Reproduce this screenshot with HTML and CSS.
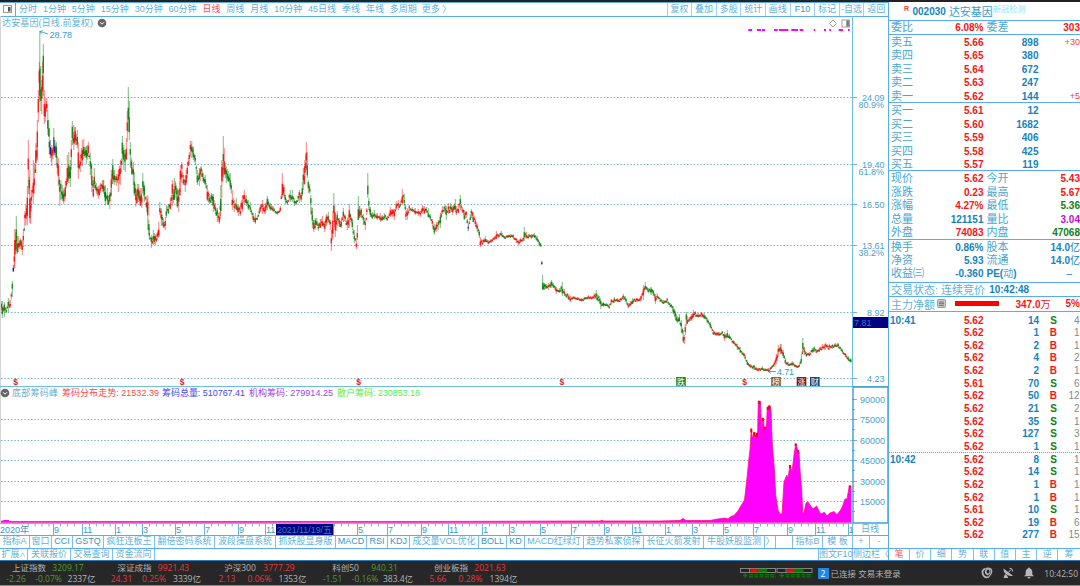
FILE: index.html
```html
<!DOCTYPE html>
<html lang="zh-CN">
<head>
    <meta charset="UTF-8">
    <meta name="viewport" content="width=device-width, initial-scale=1.0">
    <title>达安基因 002030</title>
    <link rel="stylesheet" href="styles.css">
</head>
<body>
    <div class="app">
        <div class="workspace">
            <div class="left">
                <div class="toolbar">
                    <div class="layout-btn">
                        <svg width="9" height="8" viewBox="0 0 9 8"><rect x="0.5" y="0.5" width="8" height="7" fill="#fff" stroke="#999"/><rect x="5" y="2" width="2.5" height="4.5" fill="#555"/></svg>
                    </div>
                    <div class="periods">
                        <span>分时</span><span>1分钟</span><span>5分钟</span><span>15分钟</span><span>30分钟</span><span>60分钟</span><span class="active">日线</span><span>周线</span><span>月线</span><span>10分钟</span><span>45日线</span><span>季线</span><span>年线</span><span>多周期</span><span class="more">更多 〉</span>
                    </div>
                    <div class="actions">
                        <span>复权</span><span>叠加</span><span>多股</span><span>统计</span><span>画线</span><span class="lat">F10</span><span>标记</span><span>-自选</span><span>返回</span>
                    </div>
                </div>

                <svg class="plot" width="888" height="519" viewBox="0 16 888 519">
                    <g id="grid"></g>
                    <g id="candles"></g>
                    <g id="signals"></g>
                    <g id="chips"></g>

                    <!-- frames -->
                    <path class="side" d="M0.5 16V523"/>
                    <path class="frame" d="M852.5 16V386M0 386.5H888"/>
                    <path class="frame strong" d="M853 387V523H888V387Z"/>
                    <path class="frame" d="M0 523.5H888M852.5 523V535"/>

                    <!-- main chart header -->
                    <text class="t" x="2" y="26" textLength="91">达安基因(日线.前复权)</text>
                    <circle cx="102" cy="23" r="4.3" fill="#666"/>
                    <path d="M100 22.2l2 2 2-2" class="chev"/>
                    <path d="M833 20l3.5 3.5-3.5 3.5-3.5-3.5z" fill="#fff" stroke="#888" stroke-width="0.8"/>
                    <rect x="842" y="20" width="7.5" height="7" fill="#fff" stroke="#888" stroke-width="0.8"/>
                    <rect x="846.3" y="20.4" width="2.6" height="6.2" fill="#777"/>
                    <path class="arrow" d="M48 34l-8-2.5m3-1l-3 1 1.5 2.5"/>
                    <text class="t num" x="49.5" y="38">28.78</text>
                    <path class="arrow" d="M776 371.5h-8m3-2l-3 2 3 2"/>
                    <text class="t num" x="777" y="375" textLength="17">4.71</text>

                    <!-- event markers -->
                    <g id="markers"></g>

                    <!-- sub chart legend -->
                    <circle cx="5" cy="393" r="4.3" fill="#666"/>
                    <path d="M3 392.2l2 2 2-2" class="chev"/>
                    <text class="t" x="12" y="396" textLength="46">底部筹码峰</text>
                    <text class="t c-red" x="62" y="396" textLength="97">筹码分布走势: 21532.39</text>
                    <text class="t c-blue" x="162" y="396" textLength="83">筹码总量: 510767.41</text>
                    <text class="t c-purple" x="249" y="396" textLength="84">机构筹码: 279914.25</text>
                    <text class="t c-lime" x="337" y="396" textLength="83">散户筹码: 230853.16</text>

                    <rect x="853" y="317" width="35" height="11" fill="#000080"/>
                    <text class="t num hl" x="854" y="325.5">7.81</text>
                    <g id="months"></g>
                    <rect x="276" y="524" width="57.5" height="11" fill="#000080"/>
                    <text class="t hl" x="277" y="532.5" textLength="55">2021/11/19/五</text>
                    <text class="t" x="861" y="532">日线</text>
                </svg>

                <div class="tabs indicators">
                    <span>指标A</span><span>窗口</span><span class="lat">CCI</span><span class="lat">GSTQ</span><span>疯狂连板王</span><span>翻倍密码系统</span><span>波段操盘系统</span><span>抓妖股显身版</span><span class="lat">MACD</span><span class="lat">RSI</span><span class="lat">KDJ</span><span>成交量VOL优化</span><span class="lat">BOLL</span><span class="lat">KD</span><span>MACD红绿灯</span><span>趋势私家侦探</span><span>长征火箭发射</span><span>牛股妖股监测</span><span>〉</span><span></span><span>指标B</span><span>模 板</span><span>+</span><span>-</span>
                </div>
                <div class="tabs extras">
                    <span>扩展<small>∧</small></span><span>关联报价</span><span>交易查询</span><span>资金流向</span><span></span><span>图文F10</span><span>侧边栏〈</span>
                </div>
            </div>

            <div class="right">
                <div class="stock"><i>R</i><b>002030</b><span>达安基因</span><em>新冠检测</em></div>
                <div class="block pair single">
                    <div class="row"><span>委比</span><b class="up">6.08%</b><span>委差</span><b class="up">303</b></div>
                </div>
                <div class="block book">
                    <div class="row"><span>卖五</span><b class="up">5.66</b><b>898</b><i>+30</i></div>
                    <div class="row"><span>卖四</span><b class="up">5.65</b><b>380</b><i></i></div>
                    <div class="row"><span>卖三</span><b class="up">5.64</b><b>672</b><i></i></div>
                    <div class="row"><span>卖二</span><b class="up">5.63</b><b>247</b><i></i></div>
                    <div class="row"><span>卖一</span><b class="up">5.62</b><b>144</b><i>+5</i></div>
                </div>
                <div class="block book">
                    <div class="row"><span>买一</span><b class="up">5.61</b><b>12</b><i></i></div>
                    <div class="row"><span>买二</span><b class="up">5.60</b><b>1682</b><i></i></div>
                    <div class="row"><span>买三</span><b class="up">5.59</b><b>406</b><i></i></div>
                    <div class="row"><span>买四</span><b class="up">5.58</b><b>425</b><i></i></div>
                    <div class="row"><span>买五</span><b class="up">5.57</b><b>119</b><i></i></div>
                </div>
                <div class="block pair">
                    <div class="row"><span>现价</span><b class="up">5.62</b><span>今开</span><b class="up">5.43</b></div>
                    <div class="row"><span>涨跌</span><b class="up">0.23</b><span>最高</span><b class="up">5.67</b></div>
                    <div class="row"><span>涨幅</span><b class="up">4.27%</b><span>最低</span><b class="down">5.36</b></div>
                    <div class="row"><span>总量</span><b>121151</b><span>量比</span><b class="ratio">3.04</b></div>
                    <div class="row"><span>外盘</span><b class="up">74083</b><span>内盘</span><b class="down">47068</b></div>
                </div>
                <div class="block pair basics">
                    <div class="row"><span>换手</span><b>0.86%</b><span>股本</span><b>14.0<u>亿</u></b></div>
                    <div class="row"><span>净资</span><b>5.93</b><span>流通</span><b>14.0<u>亿</u></b></div>
                    <div class="row"><span>收益㈢</span><b>-0.360</b><span class="pe"><b>PE(</b>动<b>)</b></span><b class="dash">–</b></div>
                </div>
                <div class="block status-line"><span>交易状态: 连续竞价</span><b>10:42:48</b></div>
                <div class="block netflow">
                    <span>主力净额</span>
                    <svg width="9" height="9" viewBox="0 0 9 9"><rect x="0.5" y="0.5" width="8" height="8" rx="1" fill="#ccc" stroke="#999"/><path d="M2 3h5M2 4.7h5M2 6.4h5" stroke="#555" stroke-width="0.8"/></svg>
                    <div class="bar"></div>
                    <b class="up">347.0<u>万</u></b><b class="up">5%</b>
                </div>
                <div class="ticks" id="ticks"></div>
                <div class="tabs side-tabs">
                    <span class="active">笔</span><span>价</span><span>细</span><span>势</span><span>联</span><span>值</span><span>主</span><span>逆</span><span>筹</span>
                </div>
            </div>
        </div>

        <div class="statusbar">
            <div class="index down"><div class="name"><span>上证指数</span><b>3209.17</b></div><div class="vals"><b>-2.26</b><b>-0.07%</b><span>2337亿</span></div></div>
            <div class="index up"><div class="name"><span>深证成指</span><b>9921.43</b></div><div class="vals"><b>24.31</b><b>0.25%</b><span>3339亿</span></div></div>
            <div class="index up"><div class="name"><span>沪深300</span><b>3777.29</b></div><div class="vals"><b>2.13</b><b>0.06%</b><span>1353亿</span></div></div>
            <div class="index down"><div class="name"><span>科创50</span><b>940.31</b></div><div class="vals"><b>-1.51</b><b>-0.16%</b><span>383.4亿</span></div></div>
            <div class="index up"><div class="name"><span>创业板指</span><b>2021.63</b></div><div class="vals"><b>5.66</b><b>0.28%</b><span>1394亿</span></div></div>
            <div class="conn">
                <svg width="73" height="12" viewBox="0 0 73 12">
                    <g id="meter">
                        <rect x="0.5" y="1.5" width="35" height="4" fill="#222" stroke="#999" stroke-width="0.8"/>
                        <path d="M9.500 1v5" stroke="#999" stroke-width="0.8"/>
                        <rect x="10.5" y="1.8" width="7" height="3.6" fill="#f00"/>
                        <rect x="17.5" y="1.8" width="9.5" height="3.6" fill="#008000"/>
                        <path d="M3 8.5h4.6M5.3 6v5" stroke="#008000" stroke-width="1.3"/>
                        <path d="M9 7.6h27M9 9.8h27" stroke="#008000" stroke-width="1.3" stroke-dasharray="4 1.3"/>
                    </g>
                    <use href="#meter" x="36.5"/>
                </svg>
                <span class="badge">2</span>
                <span class="login">已连接 交易未登录</span>
            </div>
            <div class="tray">
                <svg width="12" height="12" viewBox="0 0 12 12" fill="none" stroke="#b8b8b8"><path d="M4.600 1.800C1.500 2 .8 5 2 7.500 3 9.800 5 10.800 7 10" stroke-width="1.8"/><path d="M4.600 1.600C7 .4 11 1.200 10.800 4.500 10.600 7.500 9 8.500 7 10.600" stroke-width="1.2"/><ellipse cx="7" cy="4.600" rx="2.100" ry="2.600" stroke-width="1.200"/><path d="M4.600 3.500C4 6 5.500 7.500 7.500 8" stroke-width="1.200"/></svg>
                <svg width="12" height="12" viewBox="0 0 12 12" fill="#b8b8b8"><path d="M1.500 1.500C1 5.500 5.500 10 11 8.800z"/><path d="M3 7L1.500 11h4.700L5.200 8.500z"/><path d="M6.200 5.500l3-3" stroke="#b8b8b8"/><path d="M7.500 1.200a3.300 3.300 0 0 1 3.300 3.300" fill="none" stroke="#b8b8b8"/></svg>
                <svg width="12" height="12" viewBox="0 0 12 12" fill="#b8b8b8"><path d="M6 .5a1 1 0 0 1 1 1C8.700 2 9.300 3.500 9.300 5v2.500L11 9.300H1L2.700 7.500V5C2.700 3.500 3.300 2 5 1.500a1 1 0 0 1 1-1z"/><path d="M4.500 10h3a1.500 1.500 0 0 1-3 0z"/></svg>
                <span>10:42:50</span>
            </div>
        </div>
    </div>
    <script src="chart.js"></script>
</body>
</html>
```

FILE: styles.css
```css
* {
    box-sizing: border-box;
}
body {
    margin: 0;
    width: 1080px;
    height: 586px;
    overflow: hidden;
    background: #fff;
    font-family: "Liberation Sans", "Noto Sans CJK SC", sans-serif;
    font-size: 9px;
    color: #5fb2d8;
}
b, i, em, u {
    font-style: normal;
    text-decoration: none;
}
.app {
    display: flex;
    flex-direction: column;
    height: 586px;
    border-top: 2px solid #222;
}
.workspace {
    display: flex;
    height: 558px;
}
.left {
    width: 888px;
    display: flex;
    flex-direction: column;
}

/* top toolbar */
.toolbar {
    display: flex;
    height: 15px;
    margin-bottom: -1px;
    line-height: 13px;
    border-top: 1px solid #58acf0;
    border-bottom: 1px solid #58acf0;
    white-space: nowrap;
}
.layout-btn {
    width: 16px;
    padding: 2px 0 0 3px;
    line-height: 0;
    border-right: 1px solid #58acf0;
}
.periods {
    display: flex;
    gap: 5.9px;
    flex: 1;
    padding-left: 3px;
}
.periods .more {
    margin-left: -1px;
}
.active {
    color: #ff5050;
}
.actions {
    display: grid;
    grid-template-columns: repeat(9, 24.6px);
}
.actions span {
    text-align: center;
    border-left: 1px solid #9fd0f5;
}

/* plot */
.plot {
    display: block;
    flex: none;
}
.t {
    font-size: 9px;
    fill: #5fb2d8;
}
.t.num {
    fill: #3a98ca;
}
.t.axis {
    text-anchor: end;
    fill: #479fce;
}
.t.hl {
    fill: #2a7bc0;
}
.t.c-red { fill: #ff4b4b; }
.t.c-blue { fill: #4646ee; }
.t.c-purple { fill: #a040f0; }
.t.c-lime { fill: #50f050; }
.grid {
    stroke: #78b3cc;
    stroke-dasharray: 1.5 1.83;
    fill: none;
}
.frame {
    stroke: #6fbce4;
    fill: none;
}
.frame.strong {
    stroke: #3f9fd2;
    stroke-width: 1.4;
}
.side {
    stroke: #d4d4d4;
}
.tick {
    stroke: #3f9fd2;
    stroke-width: 0.8;
}
.chev {
    stroke: #fff;
    fill: none;
}
.arrow {
    stroke: #2f93cb;
    stroke-width: 0.8;
    fill: none;
}
.ev {
    font-size: 8.5px;
    font-weight: bold;
    fill: #f01010;
    text-anchor: middle;
}
.ev.tag {
    fill: #fff;
    font-size: 8px;
    font-weight: normal;
}

/* tab strips */
.tabs {
    display: grid;
    height: 12.5px;
    line-height: 11.5px;
    border-top: 1px solid #58acf0;
    white-space: nowrap;
}
.tabs span {
    text-align: center;
    border-right: 1px solid #7cc0f3;
    overflow: hidden;
}
.indicators {
    grid-template-columns: 30px 22px 21px 31px 51px 60px 61px 60px 31px 21px 22px 69px 28px 18px 59px 60px 60px 61px 11px 17px 30px 30px 17px 18px;
}
.lat {
    color: #3a96c6;
}
.extras {
    grid-template-columns: 28px 43px 42px 42px 664px 34px 35px;
}
.extras small {
    font-size: 6px;
}
.side-tabs {
    grid-template-columns: 21px repeat(8, 21.2px);
}
.side-tabs span:last-child, .indicators span:last-child, .extras span:last-child {
    border-right: 0;
}

/* quote panel */
.right {
    width: 192px;
    display: flex;
    flex-direction: column;
    border-left: 1px solid #58acf0;
    font-size: 10px;
    white-space: nowrap;
}
.right b {
    color: #1583bd;
}
.right .up { color: #fa1414; }
.right .down { color: #128012; }
.right .ratio { color: #c010c8; }
.right u {
    font-weight: normal;
}
.stock {
    display: flex;
    height: 18px;
    padding: 1px 0 0 15px;
    line-height: 18px;
}
.stock i {
    font-size: 7px;
    font-weight: bold;
    color: #fa3c3c;
    line-height: 11px;
    width: 8.5px;
}
.stock span {
    font-size: 11px;
    margin-left: 3px;
    color: #3a9bce;
}
.stock em {
    font-size: 8.2px;
    line-height: 13px;
    color: #8fe4f2;
}
.block {
    border-top: 1px solid #58acf0;
    padding: 0 0 0 2px;
}
.row {
    display: grid;
    height: 13.45px;
    line-height: 15px;
}
.row > b, .row > i {
    text-align: right;
}
.row > span {
    font-size: 11px;
    color: #4aa5d0;
}
.row > i {
    font-size: 9px;
    color: #fa3c3c;
}
.pair .row {
    grid-template-columns: 36px 56.5px 32px 64.5px;
}
.pair .row > span:nth-child(3) {
    padding-left: 3px;
}
.book .row {
    grid-template-columns: 36px 56.5px 55px 41.5px;
}
.row > span.pe {
    font-size: 10px;
}
.row .dash {
    padding-right: 8px;
    font-weight: normal;
}
.row u {
    font-size: 10px;
}
.single {
    height: 14px;
}
.single .row {
    line-height: 13px;
}
.book, .pair:not(.single) {
    height: 68.2px;
}
.pair.basics {
    height: 43px;
}
.status-line {
    height: 14px;
    line-height: 14px;
    display: flex;
    gap: 4px;
    font-size: 11px;
}
.status-line b {
    font-size: 10px;
}
.netflow {
    display: flex;
    align-items: center;
    height: 16px;
    font-size: 11px;
    border-bottom: 1px solid #58acf0;
}
.netflow svg {
    margin-left: 2px;
}
.netflow .bar {
    width: 44px;
    height: 5px;
    margin-left: 9px;
    background: #f00;
}
.netflow b {
    font-size: 10px;
    margin-left: 16.5px;
}
.netflow b:last-child {
    margin: 0 0 0 auto;
}
.ticks {
    flex: 1;
    padding-top: 1px;
}
.tick-row {
    display: grid;
    grid-template-columns: 40px 53.5px 55.5px 22px 18.5px;
    height: 12.65px;
    line-height: 13px;
    padding-left: 1px;
    border-top: 1px dotted transparent;
}
.tick-row.mark {
    border-top-color: #5ba3d8;
}
.tick-row b {
    text-align: right;
}
.tick-row b:first-child {
    text-align: left;
}
.tick-row b.side-col {
    padding-right: 4px;
}
.tick-row i {
    color: #888;
    text-align: right;
}
.side-tabs {
    font-size: 9px;
}

/* bottom status bar */
.statusbar {
    display: flex;
    height: 26px;
    background: #272727;
    border-top: 1px solid #2b78b8;
    border-bottom: 1px solid #8a8a8a;
    font-family: "Open Sans", "Noto Sans CJK SC", sans-serif;
    font-size: 8.5px;
    color: #b4b4b4;
    white-space: nowrap;
}
.statusbar b {
    font-weight: normal;
}
.index {
    width: 105.5px;
    padding-top: 1px;
    line-height: 11px;
    text-align: center;
}
.name {
    display: grid;
    grid-template-columns: 40px 38px;
    padding-left: 9px;
    height: 11px;
}
.vals {
    display: grid;
    grid-template-columns: 32px 33px 33px;
    height: 11px;
}
.index.up b { color: #e03a3e; }
.index.down b { color: #4f9c30; }
.conn {
    display: flex;
    align-items: center;
    margin-left: 212px;
}
.badge {
    width: 11px;
    height: 11px;
    margin: 0 2px 0 5px;
    background: #1e88e5;
    color: #fff;
    line-height: 11px;
    text-align: center;
}
.tray {
    display: flex;
    align-items: center;
    gap: 9px;
    margin-left: auto;
    padding-right: 2px;
}
```

FILE: chart.js
```javascript
const NS = 'http://www.w3.org/2000/svg';

function add(parent, tag, attrs, text) {
    const el = document.createElementNS(NS, tag);
    for (const k in attrs) el.setAttribute(k, attrs[k]);
    if (text !== undefined) el.textContent = text;
    document.getElementById(parent).appendChild(el);
    return el;
}

// daily range: x, high, low
const range = `0,299,311 2,301,318 4,302,317 6,308,313 8,298,312 10,300,308 12,281,297 13,265,272 14.5,229,268 16,216,249 17,236,254 18,236,252
20,238,249 22,240,255 23,229,247 24.5,211,226 27,186,225 28,140,194 29.5,170,223 30.3,198,224 31,190,208 33,160,204 34,163,194 35.5,143,173
37,120,160 38,90,122 39,62,102 39.5,31,100 40.5,66,111 41.5,80,114 42.3,62,92 43,44,96 44,90,124 45,98,122 46.5,98,112 47.5,110,135 49,128,154
50,140,158 51.5,145,166 53.5,128,156 54.5,140,155 56,142,165 58,158,186 59.5,184,206 60.5,180,200 62,185,201 63.5,188,204 65,181,199 67,155,184
68.5,152,183 70,160,187 71,140,170 72,121,145 73.5,125,150 75,127,145 77,130,148 78,142,179 80,155,172 82,140,166 83.5,139,156 86,146,164
88,142,157 90,153,175 91.5,165,192 93,180,197 94,168,188 96,183,194 98,186,199 100,183,193 102,180,192 103.5,180,194 105,185,205 107,188,205
109.5,192,209 111,170,195 112.5,159,184 114,170,185 116,174,186 118,170,192 120,160,185 122,136,165 123.5,145,170 125,150,172 126,138,160
127,111,142 128,87,132 129,101,140 130,142,168 131.5,160,175 133,162,185 134,172,196 135.5,190,207 137,184,202 138.5,184,202 140,188,206
141.5,188,208 142.5,173,193 144,185,202 146,196,208 147.5,195,230 149,228,240 151,235,248 153,230,245 155,234,245 157,232,240 158.5,222,237
159.5,202,215 161,208,226 163,218,228 165,217,230 166,205,218 168,204,214 170,198,210 172,180,206 174,178,200 175.5,183,198 177,188,208
178.5,190,212 180,165,192 181.5,162,178 183,175,185 185,175,192 187,162,178 189,152,165 190,141,157 191.5,141,158 193,147,160 195,155,165
197,170,185 199,168,186 201,166,177 203,173,183 205,175,186 207,185,201 209,194,204 211,193,203 213,194,212 215,203,214 217,208,222
219,212,224 220.5,185,216 221.5,160,198 223,136,170 224,148,175 226,166,183 228,171,182 230,173,190 232,190,210 234,200,212 236,198,210
238,205,216 240,205,216 242,195,212 244,190,204 246,195,206 248,200,210 250,202,212 253,213,222 255,213,224 257,216,220 260,204,212
262,200,214 265,203,214 267,196,210 270,203,211 273,206,212 277,211,215 280,206,212 282,173,198 283.5,185,195 285,195,204 287,200,205
290,190,202 292,190,202 294,198,206 296,200,205 299,190,203 301,192,202 303,168,190 304.5,160,178 306,142,170 307,152,178 308,180,193
309.5,184,194 310.5,195,215 312,208,228 313.5,220,232 315,218,228 316.5,218,225 318,225,231 320,219,228 322,216,226 324.5,221,232
326,214,226 328,212,222 330,220,230 331,230,251 332.5,211,238 333.5,193,222 335,213,237 337,211,226 339,218,227 341,217,228 343,208,222
345,215,222 347,218,230 349,204,228 350.5,215,222 352,220,230 354,230,243 356,238,249 357,225,240 358,196,220 359.5,206,218 361,208,218
363,214,225 365,220,230 366.5,208,215 367.5,173,198 368.5,198,210 370,207,217 372,212,219 374,210,219 377,213,220 380,213,222 382,215,221
384,213,220 387,216,221 390,207,217 392,209,217 394,209,220 396,201,210 398,200,210 400,202,207 402,189,205 404,194,206 405.5,211,220
407,208,220 409,205,211 412,207,212 415,208,215 418,209,216 420,211,217 422,205,214 424,206,214 426,207,213 428,208,218 430,214,220
432,219,226 434,224,235 436,222,232 438,220,230 440,213,228 442,206,214 445,205,214 446,206,220 448,203,214 450,203,213 452,206,215
455,199,212 456,206,215 458,204,213 460,195,210 462,207,213 464,210,220 466,211,218 468,224,231 471,209,218 473,212,222 475,219,226
477,224,232 479,230,238 480,237,247 482,240,245 485,236,242 488,240,244 491,239,243 494,236,240 496,231,239 498,234,238 501,231,236
504,236,239 507,235,238 510,234,238 513,234,239 516,238,243 518,240,245 520,238,243 523,237,241 524,227,241 526,232,239 528,234,239
531,234,239 534,233,238 537,236,242 539,241,246 540.5,243,247 541.5,261,265 542.3,275,290 544,283,290 546,284,289 548,283,290 551,280,288
553,283,288 556,287,294 559,288,293 562,282,296 564,289,296 568,294,300 570,296,302 573,296,299 577,297,300 581,298,302 584,297,300
588,295,299 592,296,299 596,290,300 599,296,304 600.5,300,309 603,302,307 606,303,306 609,304,309 611,299,305 614,297,303 617,298,302
620,298,302 623,294,300 625,296,302 628,303,308 630,301,306 632,298,304 636,298,302 640,296,302 643,285,300 645,282,290 648,288,293
651,287,295 653,290,296 655,294,304 657,293,298 660,298,302 663,300,304 667,298,303 670,303,307 673,306,314 675,311,320 677,316,323
679,314,322 681,320,333 683,330,343 684,335,344 685,324,335 686,312,326 687,316,324 689,317,322 691,314,321 693,310,318 695,311,317
698,313,318 701,312,317 704,313,319 707,318,323 710,322,328 713,330,335 716,332,336 719,332,336 722,331,334 724,332,341 727,330,338
729,334,339 733,340,344 737,344,350 740,347,353 744,353,358 747,360,365 750,364,368 754,365,370 758,368,371 762,366,370 765,368,371
768,368,372 771,366,369 774,362,367 776,354,364 778,345,357 780,344,354 781,344,354 783,350,358 785,358,364 788,362,366 792,361,366
796,365,368 799,364,367 801,354,364 802.5,338,354 804,347,355 806,352,357 809,352,356 812,348,353 814,346,352 816,349,353 819,347,352
822,344,350 825,343,350 829,344,350 832,344,349 835,343,347 838,343,348 842,349,353 845,353,357 848,356,361 850.5,358,363`
    .split(/\s+/).map(p => p.split(',').map(Number));

// suspension / limit days are drawn in navy
const navy = [13, 50, 54.5, 468, 541.5];

let seed = 7;
function rnd() {
    seed = (seed * 16807) % 2147483647;
    return seed / 2147483647;
}

function candle(x, hi, lo, slope) {
    const up = rnd() < (slope < -1.5 ? 0.85 : slope > 1.5 ? 0.22 : 0.5);
    let color = up ? '#ff0000' : '#007c00';
    if (navy.includes(x)) color = '#000080';
    const h = lo - hi;
    const a = hi + h * (0.15 + rnd() * 0.4);
    const len = Math.max(1.5, h * (0.2 + rnd() * 0.3));
    add('candles', 'rect', {x: x - 0.2, y: hi, width: 1, height: h, fill: color, opacity: 0.5});
    add('candles', 'rect', {x: x - 0.4, y: a, width: 1.4, height: len, fill: color, opacity: 0.8});
}

range.forEach((p, i) => {
    const q = range[i + 1] || p;
    const slope = (q[1] + q[2] - p[1] - p[2]) / 2;
    candle(p[0], p[1], p[2], slope);
    const n = Math.round(q[0] - p[0]);
    for (let k = 1; k < n; k++) {
        const t = k / n;
        let hi = p[1] + (q[1] - p[1]) * t;
        let lo = p[2] + (q[2] - p[2]) * t;
        const h = lo - hi;
        hi += h * rnd() * 0.45;
        lo -= h * rnd() * 0.4;
        candle(p[0] + k, hi, Math.max(lo, hi + 2), slope);
    }
});

// horizontal grid and price scale
[[97.5, '24.09', '80.9%'], [164.5, '19.40', '61.8%'], [204.5, '16.50'], [245.5, '13.61', '38.2%'], [312.5, '8.92'], [378.5, '4.23']].forEach(([y, v, pct]) => {
    add('grid', 'path', {d: `M1 ${y}H852`, class: 'grid'});
    add('grid', 'path', {d: `M852 ${y}h5`, class: 'tick'});
    add('grid', 'text', {x: 884.5, y: y + 3, class: 't axis'}, v);
    if (pct) add('grid', 'text', {x: 884, y: y + 10.5, class: 't axis'}, pct);
});
[399.5, 419.5, 440.5, 460.5, 481.5, 501.5].forEach((y, i) => {
    if (i) add('grid', 'path', {d: `M1 ${y}H852`, class: 'grid'});
    add('grid', 'path', {d: `M852 ${y}h5M852 ${y + 10}h3`, class: 'tick'});
    add('grid', 'text', {x: 885, y: y + 3, class: 't axis'}, 90000 - i * 15000);
});

// signal strip
[[748.3, 752], [757, 761], [762, 765], [774, 777.7], [779, 788.3], [791.3, 798], [799.7, 803.3], [813.7, 815.3], [824, 826], [829.3, 831], [838.7, 843], [848, 849.7]].forEach(([a, b]) => {
    add('signals', 'rect', {x: a, y: 29, width: b - a, height: 2, fill: '#ff00ff'});
});

// chip distribution
const chips = '0,521.5 420,521.5 600,521 602,520.5 604,521 612,521 660,521 680,520.5 683,518.5 686,520.5 710,520.5 716,519.3 725,518 728,519 731,516.5 734,515.5 738,511 742,504 744.5,500 747,478 749,458 750,450 751.3,429 752.3,438 754.3,432 756,437 757.7,431 758.3,401 760.3,401 761,415 761.7,440 762.2,418 763.5,418 764,426 765,429 766.5,425 767.3,407 770,405.5 771,410 772.3,445 774.3,468 775.7,495 778,510 780,514 782,514 784,482 786.7,475 788,478 790,465 792,472 794,455 795.7,443.5 798,451 799,452 800,470 801.7,490 802.7,513 804,513 806,503 808,502 810,505 813,509 816.7,506 820,513 822,514 824,512 827,516 830,513 834,511.5 837,514.5 840,511 842.7,506 845,499 847,499 849.3,486 851.3,486';
add('chips', 'path', {d: 'M0 522.5H852', stroke: '#ff9a9a', 'stroke-width': 1});
add('chips', 'polygon', {points: `0,522.5 ${chips} 851.3,522.5`, fill: '#ff00ff'});
add('chips', 'path', {d: 'M1 521.5l3-1h5', stroke: '#ff00ff', fill: 'none'});
add('chips', 'polyline', {points: chips, fill: 'none', stroke: '#ff1080', 'stroke-width': 0.8});
add('chips', 'path', {d: 'M751.3 428.5v4M759.3 401v3M769.3 405.5v3.5M767.8 407v3M762.8 418v3M754.3 432v4M757 433v4M765 427v3M795.7 443.5v2.500M798 450v3M790 465v3M849.8 485.500v2', stroke: '#f00', 'stroke-width': 2});

// dividend and event markers
[15.5, 182, 358.5, 561.8, 744.5].forEach(x => add('markers', 'text', {x, y: 385, class: 'ev'}, '$'));
[[681, '跌', '#178a17'], [776, '榜', '#8a5a2a'], [801.5, '涨', '#7a1218'], [814.8, '财', '#1c3f74']].forEach(([x, s, fill]) => {
    add('markers', 'rect', {x: x - 4.8, y: 377, width: 9.6, height: 9, fill});
    add('markers', 'text', {x, y: 384.5, class: 'ev tag'}, s);
});

// month axis
const months = [[0, '2020年'], [53, '9'], [82, '11'], [115, '1'], [142, '3'], [175, '5'], [204, '7'], [238, '9'], [265, '11'], [357, '5'], [387, '7'], [421, '9'], [448, '11'], [482, '1'], [509, '3'], [540, '5'], [571, '7'], [604, '9'], [632, '11'], [665, '1'], [692, '3'], [723, '5'], [753, '7'], [787, '9'], [815, '11'], [848, '1']];
months.forEach(([x, s], i) => {
    if (i) add('months', 'path', {d: `M${x + 0.5} 524v11`, class: 'tick'});
    // the last label is cut by the scale column
    if (i < months.length - 1) add('months', 'text', {x: i ? x + 1 : 0, y: 533, class: 't num'}, s);
    const end = i + 1 < months.length ? months[i + 1][0] : x;
    for (let k = x + 7.5; k < end - 3; k += 6.9) {
        if (i || k > 26) add('months', 'path', {d: `M${k} 524v2.5`, class: 'tick'});
    }
});
add('months', 'text', {x: 848.5, y: 533, class: 't num'}, '1');

// tick list
const ticks = [['10:41', '5.62', 14, 'S', 4], ['', '5.62', 1, 'B', 1], ['', '5.62', 2, 'B', 1], ['', '5.62', 4, 'B', 2], ['', '5.62', 2, 'B', 1], ['', '5.61', 70, 'S', 6], ['', '5.62', 50, 'B', 12], ['', '5.62', 21, 'S', 2], ['', '5.62', 35, 'S', 1], ['', '5.62', 127, 'S', 3], ['', '5.62', 1, 'S', 1], ['10:42', '5.62', 8, 'S', 1], ['', '5.62', 14, 'S', 1], ['', '5.62', 1, 'B', 1], ['', '5.62', 1, 'B', 1], ['', '5.61', 10, 'S', 1], ['', '5.62', 19, 'B', 6], ['', '5.62', 277, 'B', 15]];
document.getElementById('ticks').innerHTML = ticks.map(([t, p, v, s, n], i) =>
    `<div class="tick-row${t && i ? ' mark' : ''}"><b>${t}</b><b class="up">${p}</b><b>${v}</b><b class="side-col ${s === 'B' ? 'up' : 'down'}">${s}</b><i>${n}</i></div>`
).join('');
```
